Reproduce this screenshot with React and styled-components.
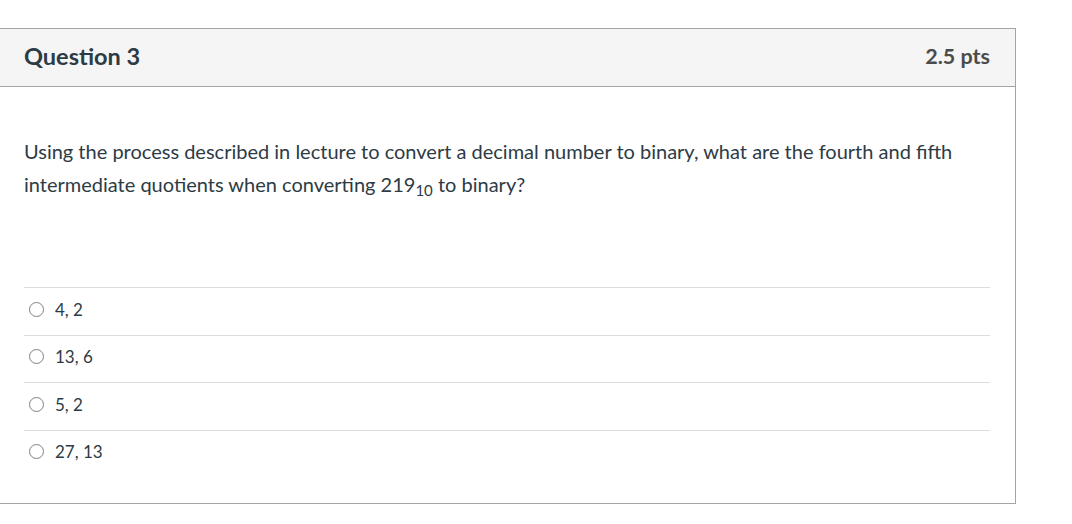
import React from 'react';
import styled, { createGlobalStyle } from 'styled-components';

const GlobalStyle = createGlobalStyle`
	body {
		margin: 0;
		background: #fff;
		font-family: Lato, 'Liberation Sans', sans-serif;
		color: #2d3b45;
	}
`;

const answers = ['4, 2', '13, 6', '5, 2', '27, 13'];

const App = () => (
	<>
		<GlobalStyle />
		<Page>
			<Card>
				<Header>
					<Title>Question 3</Title>
					<Points>2.5 pts</Points>
				</Header>
				<Body>
					<QuestionText>
						Using the process described in lecture to convert a decimal number to binary, what
						are the fourth and fifth intermediate quotients when converting 219<Sub>10</Sub> to
						binary?
					</QuestionText>
					<Answers>
						{answers.map((a) => (
							<Answer key={a}>
								<Radio type='radio' name='q3' />
								<Label>{a}</Label>
							</Answer>
						))}
					</Answers>
				</Body>
			</Card>
		</Page>
	</>
);

const Page = styled.div`
	padding-top: 28px;
`;

const Card = styled.div`
	width: 1016px;
	height: 476px;
	box-sizing: border-box;
	border: 1px solid #a5a5a5;
	border-left: none;
	display: flex;
	flex-direction: column;
`;

const Header = styled.div`
	display: flex;
	align-items: center;
	justify-content: space-between;
	height: 58px;
	box-sizing: border-box;
	padding: 0 25px 4px 24px;
	background: #f5f5f5;
	border-bottom: 1px solid #a5a5a5;
`;

const Title = styled.h2`
	margin: 0;
	font-size: 23.5px;
	font-weight: 700;
	color: #2d3b45;
`;

const Points = styled.span`
	font-size: 21.5px;
	font-weight: 700;
	color: #4b4b4b;
`;

const Body = styled.div`
	padding: 48px 25px 0 24px;
`;

const QuestionText = styled.p`
	margin: 0;
	font-size: 20px;
	line-height: 33px;
	color: #2d3b45;
`;

const Sub = styled.sub`
	font-size: 15px;
	line-height: 0;
	vertical-align: -4px;
`;

const Answers = styled.div`
	margin-top: 86px;
`;

const Answer = styled.div`
	display: flex;
	align-items: center;
	height: 47.5px;
	padding-bottom: 4px;
	border-top: 1px solid #dcdcdc;
	padding-left: 5px;
	box-sizing: border-box;
`;

const Radio = styled.input`
	appearance: none;
	width: 15px;
	height: 15px;
	margin: 0 11px 0 0;
	border: 1.5px solid #808080;
	border-radius: 50%;
	background: #fff;
`;

const Label = styled.span`
	font-size: 17px;
	color: #2d3b45;
`;

export default App;
